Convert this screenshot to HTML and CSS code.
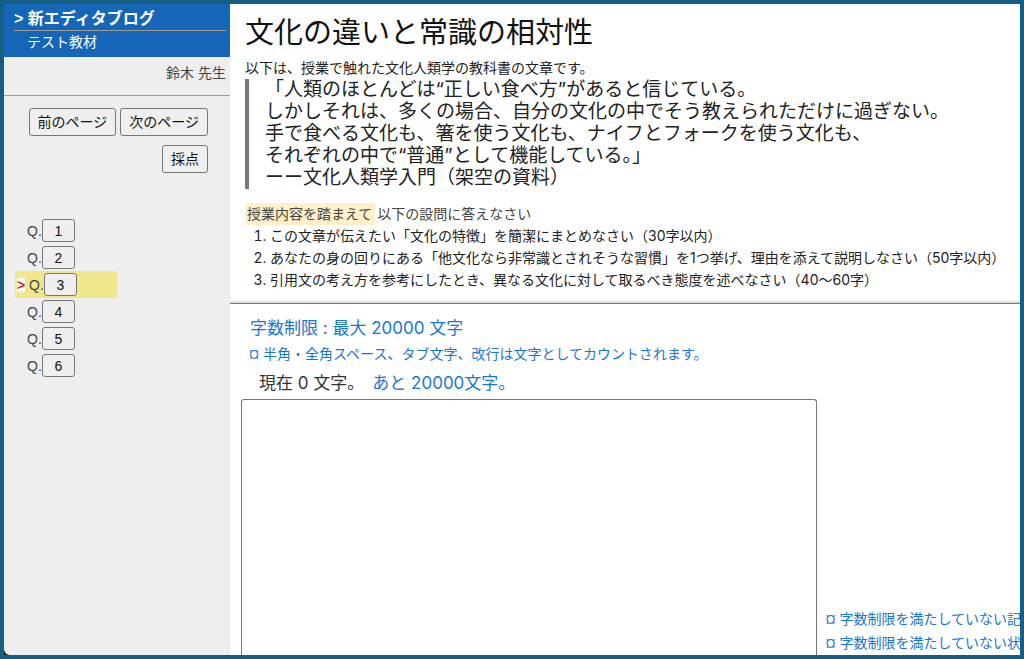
FILE: index.html
```html
<!DOCTYPE html>
<html lang="ja">
<head>
<meta charset="utf-8">
<title>新エディタブログ</title>
<link rel="stylesheet" href="styles.css">
</head>
<body>
<div class="frame">
  <aside class="sidebar">
    <header class="course">
      <h2 class="course-name">&gt; 新エディタブログ</h2>
      <p class="course-unit">テスト教材</p>
    </header>
    <p class="teacher">鈴木 先生</p>
    <div class="actions">
      <div class="action-row">
        <button class="btn" type="button">前のページ</button>
        <button class="btn" type="button">次のページ</button>
      </div>
      <button class="btn" type="button">採点</button>
    </div>
    <ul class="questions">
      <li class="question">Q.<button class="num" type="button">1</button></li>
      <li class="question">Q.<button class="num" type="button">2</button></li>
      <li class="question current"><span class="marker">&gt;</span>Q.<button class="num" type="button">3</button></li>
      <li class="question">Q.<button class="num" type="button">4</button></li>
      <li class="question">Q.<button class="num" type="button">5</button></li>
      <li class="question">Q.<button class="num" type="button">6</button></li>
    </ul>
  </aside>
  <main class="main">
    <section class="passage">
      <h1 class="title">文化の違いと常識の相対性</h1>
      <p class="intro">以下は、授業で触れた文化人類学の教科書の文章です。</p>
      <blockquote class="quote">「人類のほとんどは“正しい食べ方”があると信じている。<br>しかしそれは、多くの場合、自分の文化の中でそう教えられただけに過ぎない。<br>手で食べる文化も、箸を使う文化も、ナイフとフォークを使う文化も、<br>それぞれの中で“普通”として機能している。」<br>ーー文化人類学入門（架空の資料）</blockquote>
      <p class="instruction"><mark class="mark">授業内容を踏まえて</mark>以下の設問に答えなさい</p>
      <ol class="tasks">
        <li>この文章が伝えたい「文化の特徴」を簡潔にまとめなさい（30字以内）</li>
        <li>あなたの身の回りにある「他文化なら非常識とされそうな習慣」を1つ挙げ、理由を添えて説明しなさい（50字以内）</li>
        <li>引用文の考え方を参考にしたとき、異なる文化に対して取るべき態度を述べなさい（40〜60字）</li>
      </ol>
    </section>
    <section class="answer">
      <p class="limit">字数制限 : 最大 20000 文字</p>
      <p class="note">¤ 半角・全角スペース、タブ文字、改行は文字としてカウントされます。</p>
      <label class="count" for="answer">現在 0 文字。<span class="remaining">あと 20000文字。</span></label>
      <div class="editor">
        <textarea class="input" id="answer"></textarea>
        <div class="warnings">
          <p>¤ 字数制限を満たしていない記</p>
          <p>¤ 字数制限を満たしていない状</p>
        </div>
      </div>
    </section>
  </main>
</div>
</body>
</html>
```

FILE: styles.css
```css
* {
  box-sizing: border-box;
}

body,
h1,
h2,
p,
ul,
ol,
blockquote {
  margin: 0;
  padding: 0;
}

body {
  background: #111;
  color: #222;
  font: 14px/22px "Liberation Sans", "Noto Sans CJK JP", sans-serif;
}

.frame {
  display: flex;
  height: 100vh;
  overflow: hidden;
  border: 4px solid #156082;
}

.sidebar {
  flex: 0 0 226px;
  background: #eee;
  border-bottom-left-radius: 6px;
  color: #444;
}

.course {
  height: 53px;
  padding: 4px 4px 0 10px;
  background: #1565b8;
  color: #fff;
}

.course-name {
  border-bottom: 1px solid #a09a90;
  font-size: 16px;
  line-height: 22px;
}

.course-unit {
  padding-left: 13px;
}

.teacher {
  height: 39px;
  padding: 5px 4px 0 0;
  border-bottom: 1px solid #999;
  text-align: right;
}

.actions {
  display: flex;
  flex-direction: column;
  align-items: flex-end;
  gap: 9px;
  padding: 12px 22px 0 0;
}

.action-row {
  display: flex;
  gap: 4px;
}

.btn,
.num {
  border: 1px solid #777;
  border-radius: 3px;
  background: #efefef;
  color: #111;
  font: inherit;
}

.btn {
  height: 28px;
  padding: 0 8px;
  line-height: 24px;
}

.questions {
  width: 102px;
  margin: 44px 0 0 11px;
  list-style: none;
}

.question {
  display: flex;
  align-items: center;
  height: 27px;
  padding-left: 12px;
}

.num {
  width: 33px;
  height: 23px;
  padding: 0;
  line-height: 20px;
}

.current {
  padding-left: 2px;
  background: #f0e68c;
}

.marker {
  width: 8px;
  margin-right: 4px;
  background: #fff;
  color: #d32f0f;
  font-weight: bold;
  line-height: 14px;
}

.main {
  display: flex;
  flex: 1;
  flex-direction: column;
  min-width: 0;
  background: #fff;
  font-family: Inter, "Noto Sans CJK JP", sans-serif;
}

.passage {
  padding: 5px 0 12px 15px;
  border-bottom: 1px solid #777;
  box-shadow: inset 0 -2px #ddd;
}

.title {
  color: #111;
  font-size: 29px;
  font-weight: normal;
  line-height: 48px;
}

.quote {
  margin-bottom: 14px;
  padding-left: 16px;
  border-left: 4px solid #777;
  font-size: 19px;
}

.instruction {
  color: #444;
}

.mark {
  display: inline-block;
  margin-right: 2px;
  padding: 0 3px 0 2px;
  background: #fff0c8;
  color: inherit;
}

.tasks {
  padding-left: 25px;
}

.tasks li {
  white-space: nowrap;
}

.answer {
  display: flex;
  flex: 1;
  flex-direction: column;
  min-height: 0;
  padding: 11px 0 0 11px;
  color: #1976d2;
}

.limit,
.count {
  font-size: 17px;
}

.limit {
  padding-left: 9px;
  line-height: 26px;
}

.note {
  padding-left: 8px;
  line-height: 26px;
}

.count {
  padding: 4px 0 4px 18px;
  color: #333;
  line-height: 24px;
}

.remaining {
  margin-left: 8px;
  color: #1976d2;
}

.editor {
  display: flex;
  flex: 1;
  gap: 8px;
  min-height: 0;
}

.input {
  flex: 0 0 74%;
  border: 1px solid #777;
  border-bottom: 0;
  border-radius: 3px 3px 0 0;
  font: inherit;
  resize: none;
}

.warnings {
  align-self: flex-end;
  min-width: 0;
  overflow: hidden;
  line-height: 24px;
  white-space: nowrap;
}
```
